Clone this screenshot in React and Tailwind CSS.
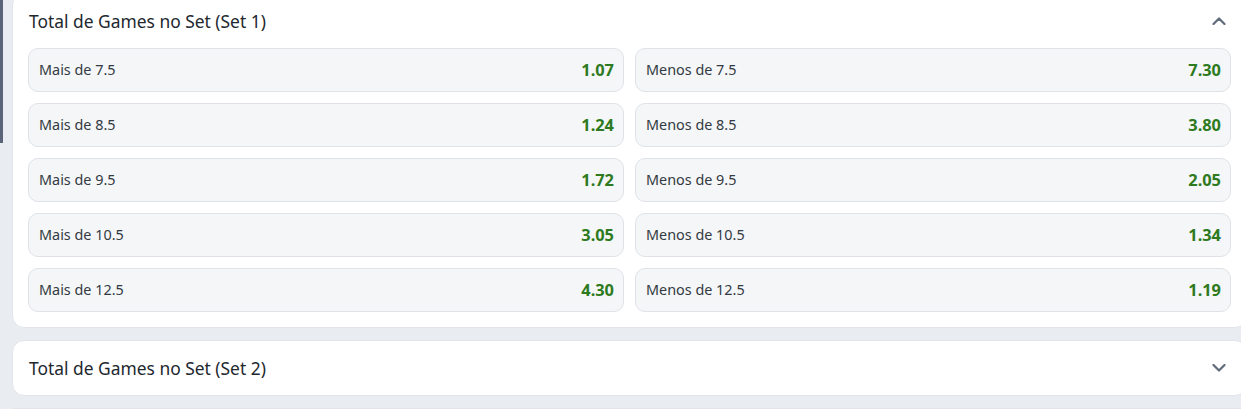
import React from 'react'

const rows = [
  ['Mais de 7.5', '1.07', 'Menos de 7.5', '7.30'],
  ['Mais de 8.5', '1.24', 'Menos de 8.5', '3.80'],
  ['Mais de 9.5', '1.72', 'Menos de 9.5', '2.05'],
  ['Mais de 10.5', '3.05', 'Menos de 10.5', '1.34'],
  ['Mais de 12.5', '4.30', 'Menos de 12.5', '1.19'],
]

function Chevron({ up }) {
  return (
    <svg width="14" height="8" viewBox="0 0 14 8" fill="none" stroke="#5f6b7b" strokeWidth="2.2" strokeLinecap="round" strokeLinejoin="round">
      <path d={up ? 'M1.5 7l5.5-5.5 5.5 5.5' : 'M1.5 1l5.5 5.5 5.5-5.5'} />
    </svg>
  )
}

function Odd({ label, value }) {
  return (
    <div className="h-[44px] flex items-center justify-between rounded-[10px] border border-[#dfe2e7] bg-[#f5f6f8] pl-[10px] pr-[9px]">
      <span className="text-[14.4px] text-[#333a42]">{label}</span>
      <span className="text-[16.4px] font-bold text-[#2e7a1e]">{value}</span>
    </div>
  )
}

function Header({ title, up }) {
  return (
    <div className="h-[54px] flex items-center justify-between pl-[16px] pr-[20px]">
      <span className="text-[17.4px] text-[#22272e]">{title}</span>
      <Chevron up={up} />
    </div>
  )
}

export default function App() {
  return (
    <div className="w-[1241px] h-[409px] overflow-hidden bg-[#e9ecf0] flex" style={{ fontFamily: '"Noto Sans", sans-serif' }}>
      <div className="w-[12px] shrink-0">
        <div className="w-[3px] h-[143px] bg-[#5a6478]" />
      </div>
      <div className="w-[1235px] shrink-0 -mt-[7px] flex flex-col gap-[12px]">
        <div className="bg-white rounded-[12px] border border-[#e1e4e9]">
          <Header title="Total de Games no Set (Set 1)" up />
          <div className="grid grid-cols-2 gap-[11px] px-[15px] pb-[15px]">
            {rows.map((r, i) => (
              <React.Fragment key={i}>
                <Odd label={r[0]} value={r[1]} />
                <Odd label={r[2]} value={r[3]} />
              </React.Fragment>
            ))}
          </div>
        </div>
        <div className="bg-white rounded-[12px] border border-[#e1e4e9]">
          <Header title="Total de Games no Set (Set 2)" />
        </div>
        <div className="bg-white rounded-[12px] border border-[#e1e4e9] h-[54px]" />
      </div>
    </div>
  )
}
